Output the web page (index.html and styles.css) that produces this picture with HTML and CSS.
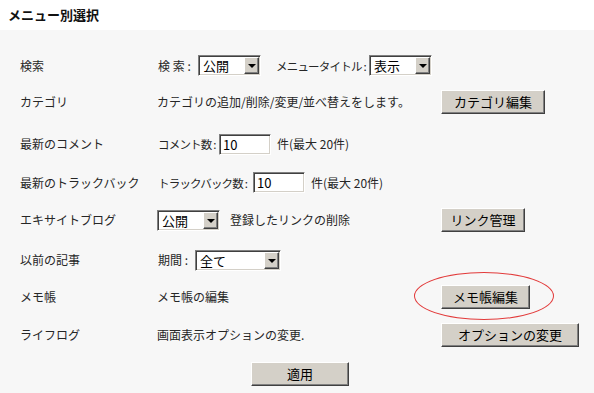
FILE: index.html
```html
<!DOCTYPE html>
<html lang="ja">
<head>
<meta charset="utf-8">
<title>メニュー別選択</title>
<link rel="stylesheet" href="styles.css">
</head>
<body>
<div class="page">
  <h1 class="title">メニュー別選択</h1>
  <div class="panel">
    <div class="grid">
      <div class="label">検索</div>
      <div class="field">
        <span class="txt pre pre-search">検 索 :</span>
        <span class="select sel-a"><span class="sel-val">公開</span><span class="sel-btn"><span class="tri"></span></span></span>
        <span class="txt pre narrow pre-title">メニュータイトル :</span>
        <span class="select sel-a"><span class="sel-val">表示</span><span class="sel-btn"><span class="tri"></span></span></span>
      </div>
      <div class="act"></div>

      <div class="label">カテゴリ</div>
      <div class="field"><span class="txt">カテゴリの追加/削除/変更/並べ替えをします。</span></div>
      <div class="act"><button class="btn btn-cat">カテゴリ編集</button></div>

      <div class="label">最新のコメント</div>
      <div class="field">
        <span class="txt pre narrow pre-comment">コメント数 :</span>
        <span class="input">10</span>
        <span class="txt gap-s">件(最大 20件)</span>
      </div>
      <div class="act"></div>

      <div class="label">最新のトラックバック</div>
      <div class="field">
        <span class="txt pre narrow pre-tb">トラックバック数 :</span>
        <span class="input">10</span>
        <span class="txt gap-s">件(最大 20件)</span>
      </div>
      <div class="act"></div>

      <div class="label">エキサイトブログ</div>
      <div class="field">
        <span class="select sel-a"><span class="sel-val">公開</span><span class="sel-btn"><span class="tri"></span></span></span>
        <span class="txt gap-m">登録したリンクの削除</span>
      </div>
      <div class="act"><button class="btn btn-link">リンク管理</button></div>

      <div class="label">以前の記事</div>
      <div class="field">
        <span class="txt pre pre-period">期間 :</span>
        <span class="select sel-b"><span class="sel-val">全て</span><span class="sel-btn"><span class="tri"></span></span></span>
      </div>
      <div class="act"></div>

      <div class="label">メモ帳</div>
      <div class="field"><span class="txt">メモ帳の編集</span></div>
      <div class="act"><span class="mark"><button class="btn btn-memo">メモ帳編集</button><span class="ring"></span></span></div>

      <div class="label">ライフログ</div>
      <div class="field"><span class="txt">画面表示オプションの変更.</span></div>
      <div class="act"><button class="btn btn-opt">オプションの変更</button></div>
    </div>
    <div class="actions"><button class="btn btn-apply">適用</button></div>
  </div>
</div>
</body>
</html>
```

FILE: styles.css
```css
html, body {
  margin: 0;
  padding: 0;
  background: #ffffff;
}

body {
  font-family: "Noto Sans CJK JP", "Noto Sans", sans-serif;
  font-size: 12px;
  color: #262626;
}

.page {
  width: 594px;
  height: 393px;
  display: flex;
  flex-direction: column;
}

.title {
  margin: 0;
  height: 32px;
  padding-left: 8px;
  font-size: 13px;
  font-weight: bold;
  line-height: 29px;
  color: #111;
  background: #fff;
}

.panel {
  flex: 1;
  background: #f7f7f7;
  padding-top: 18px;
}

.grid {
  display: grid;
  grid-template-columns: 137px 284px 1fr;
  grid-template-rows: 35px 38px 46px 31px 44px 36px 37px 40px;
  padding-left: 20px;
  align-items: center;
}

.label {
  line-height: 16px;
}

.field {
  display: flex;
  align-items: center;
  white-space: nowrap;
}

.txt {
  line-height: 16px;
}

.pre {
  display: inline-block;
  flex-shrink: 0;
  box-sizing: border-box;
  padding-left: 1px;
  white-space: pre;
}

.narrow {
  font-size: 11.5px;
  letter-spacing: -0.8px;
}

.pre-search { width: 41px; }
.pre-title { width: 94px; margin-left: 14px; }
.pre-comment { width: 62px; }
.pre-tb { width: 96px; }
.pre-period { width: 38px; }

.gap-s { margin-left: 6px; }
.gap-m { margin-left: 10px; }

.select {
  display: inline-flex;
  flex-shrink: 0;
  align-items: stretch;
  box-sizing: border-box;
  height: 21px;
  background: #fff;
  border: 1px solid;
  border-color: #808080 #ffffff #ffffff #808080;
  box-shadow: inset 1px 1px 0 #404040, inset -1px -1px 0 #d4d0c8;
  padding: 1px;
}

.sel-a { width: 63px; }
.sel-b { width: 86px; }

.sel-val {
  flex: 1;
  padding-left: 3px;
  font-size: 13px;
  line-height: 17px;
  color: #000;
}

.sel-btn {
  width: 15px;
  box-sizing: border-box;
  background: #d4d0c8;
  border: 1px solid;
  border-color: #ffffff #404040 #404040 #ffffff;
  box-shadow: inset -1px -1px 0 #808080;
  display: flex;
  align-items: center;
  justify-content: center;
}

.tri {
  width: 0;
  height: 0;
  border-left: 4px solid transparent;
  border-right: 4px solid transparent;
  border-top: 4px solid #000;
  margin-top: 1px;
}

.input {
  display: inline-block;
  flex-shrink: 0;
  box-sizing: border-box;
  width: 52px;
  height: 21px;
  background: #fff;
  border: 1px solid;
  border-color: #808080 #ffffff #ffffff #808080;
  box-shadow: inset 1px 1px 0 #404040, inset -1px -1px 0 #d4d0c8;
  padding: 1px 3px;
  font-size: 13px;
  line-height: 17px;
  color: #000;
}

.act {
  display: flex;
  align-items: center;
}

.btn {
  box-sizing: border-box;
  height: 24px;
  padding: 0;
  margin: 0;
  font-family: "Noto Sans CJK JP", "Noto Sans", sans-serif;
  font-size: 13px;
  color: #000;
  background: #d4d0c8;
  border: 1px solid;
  border-color: #ffffff #404040 #404040 #ffffff;
  box-shadow: inset -1px -1px 0 #808080;
  line-height: 20px;
}

.btn-cat { width: 104px; }
.btn-link { width: 84px; }
.btn-memo { width: 89px; }
.btn-opt { width: 138px; }
.btn-apply { width: 98px; }

.mark {
  position: relative;
  display: inline-flex;
}

.ring {
  position: absolute;
  left: -27px;
  top: -13px;
  width: 140px;
  height: 48px;
  box-sizing: border-box;
  border: 1px solid #e23a3a;
  border-radius: 50%;
  pointer-events: none;
}

.actions {
  height: 38px;
  display: flex;
  align-items: center;
  justify-content: center;
  padding-left: 6px;
}
```
